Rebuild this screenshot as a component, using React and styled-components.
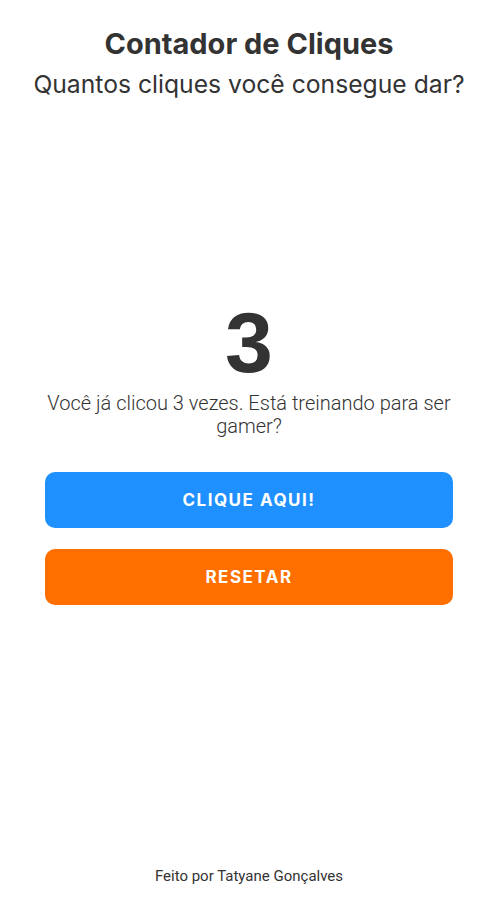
import styled, { createGlobalStyle } from "styled-components";
import { useState } from "react";

const GlobalStyle = createGlobalStyle`
    * {
        box-sizing: border-box;
    }
    body {
        margin: 0;
        background: #fff;
        color: #333;
        font-family: "Roboto", "Liberation Sans", sans-serif;
    }
`

const Page = styled.div`
    min-height: 100vh;
    display: flex;
    flex-direction: column;
    align-items: center;
`

const Header = styled.header`
    text-align: center;
    padding-top: 26px;
`

const Title = styled.h1`
    margin: 0;
    font-family: "Inter", sans-serif;
    font-weight: 700;
    font-size: 29px;
    line-height: 35px;
    color: #333;
`

const Subtitle = styled.h2`
    margin: 8px 0 0;
    font-family: "Inter", sans-serif;
    font-weight: 400;
    font-size: 24.7px;
    line-height: 30px;
    color: #333;
`

const Main = styled.main`
    flex: 1;
    width: 100%;
    display: flex;
    flex-direction: column;
    align-items: center;
    justify-content: center;
    padding: 0 45px 70px;
`

const Count = styled.div`
    font-family: "Liberation Sans", Arial, sans-serif;
    font-weight: 700;
    font-size: 86px;
    line-height: 100px;
    color: #333;
`

const Message = styled.p`
    margin: 0 0 34px;
    text-align: center;
    font-weight: 300;
    font-size: 20px;
    line-height: 23px;
    color: #333;
`

const Button = styled.button`
    width: 100%;
    height: 56px;
    border: none;
    border-radius: 10px;
    background: ${({ $color }) => $color};
    color: #fff;
    font-family: "Inter", sans-serif;
    font-weight: 700;
    font-size: 17px;
    letter-spacing: 1.5px;
    text-transform: uppercase;
    cursor: pointer;
    & + & {
        margin-top: 21px;
    }
`

const Footer = styled.footer`
    padding-bottom: 20px;
    font-size: 15px;
    color: #333;
`

const App = () => {
    const [count, setCount] = useState(3)

    return (
        <Page>
            <GlobalStyle />
            <Header>
                <Title>Contador de Cliques</Title>
                <Subtitle>Quantos cliques você consegue dar?</Subtitle>
            </Header>
            <Main>
                <Count>{count}</Count>
                <Message>Você já clicou {count} vezes. Está treinando para ser gamer?</Message>
                <Button $color="#1e90ff" onClick={() => setCount(count + 1)}>Clique aqui!</Button>
                <Button $color="#ff6f00" onClick={() => setCount(0)}>Resetar</Button>
            </Main>
            <Footer>Feito por Tatyane Gonçalves</Footer>
        </Page>
    )
}

export default App;
